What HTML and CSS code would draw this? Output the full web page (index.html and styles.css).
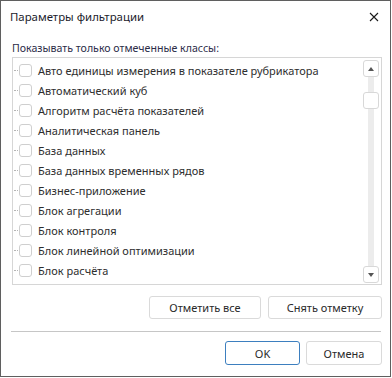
FILE: index.html
```html
<!DOCTYPE html>
<html lang="ru">
<head>
<meta charset="utf-8">
<title>Параметры фильтрации</title>
<link rel="stylesheet" href="styles.css">
</head>
<body>
<div class="dialog">
  <div class="titlebar">
    <span class="title">Параметры фильтрации</span>
    <span class="close" aria-label="Закрыть">
      <svg width="10" height="10" viewBox="0 0 10 10"><path d="M1 1L9 9M9 1L1 9" stroke="#1a1a1a" stroke-width="1.1" fill="none"/></svg>
    </span>
  </div>
  <div class="content">
    <div class="label">Показывать только отмеченные классы:</div>
    <div class="listbox">
      <div class="list">
        <div class="row"><span class="tree"></span><span class="cb"></span><span class="txt">Авто единицы измерения в показателе рубрикатора</span></div>
        <div class="row"><span class="tree"></span><span class="cb"></span><span class="txt">Автоматический куб</span></div>
        <div class="row"><span class="tree"></span><span class="cb"></span><span class="txt">Алгоритм расчёта показателей</span></div>
        <div class="row"><span class="tree"></span><span class="cb"></span><span class="txt">Аналитическая панель</span></div>
        <div class="row"><span class="tree"></span><span class="cb"></span><span class="txt">База данных</span></div>
        <div class="row"><span class="tree"></span><span class="cb"></span><span class="txt">База данных временных рядов</span></div>
        <div class="row"><span class="tree"></span><span class="cb"></span><span class="txt">Бизнес-приложение</span></div>
        <div class="row"><span class="tree"></span><span class="cb"></span><span class="txt">Блок агрегации</span></div>
        <div class="row"><span class="tree"></span><span class="cb"></span><span class="txt">Блок контроля</span></div>
        <div class="row"><span class="tree"></span><span class="cb"></span><span class="txt">Блок линейной оптимизации</span></div>
        <div class="row"><span class="tree"></span><span class="cb"></span><span class="txt">Блок расчёта</span></div>
        <div class="row"><span class="tree"></span><span class="cb"></span></div>
      </div>
      <div class="scrollbar">
        <div class="sbtn"><svg width="6" height="4" viewBox="0 0 6 4"><path d="M0 4L3 0L6 4Z" fill="#555"/></svg></div>
        <div class="track"><div class="thumb"></div></div>
        <div class="sbtn"><svg width="6" height="4" viewBox="0 0 6 4"><path d="M0 0L6 0L3 4Z" fill="#555"/></svg></div>
      </div>
    </div>
    <div class="actions">
      <button class="btn w112">Отметить все</button>
      <button class="btn w114">Снять отметку</button>
    </div>
    <div class="sep"></div>
    <div class="footer">
      <button class="btn ok">OK</button>
      <button class="btn cancel">Отмена</button>
    </div>
  </div>
</div>
</body>
</html>
```
FILE: styles.css
```css
html, body {
  margin: 0;
  padding: 0;
  background: #ffffff;
}
.dialog {
  box-sizing: border-box;
  width: 391px;
  height: 377px;
  border: 1px solid #5f5f5f;
  background: #ffffff;
  font-family: "Noto Sans", "Open Sans", sans-serif;
  font-size: 11px;
  color: #2a2a2a;
}
.titlebar {
  height: 31px;
  display: flex;
  align-items: center;
  justify-content: space-between;
  padding: 0 9px 0 9px;
}
.title {
  font-size: 11.4px;
  color: #1c1c2c;
}
.close {
  display: flex;
  width: 12px;
  height: 12px;
  align-items: center;
  justify-content: center;
  margin-right: 1px;
}
.content {
  padding: 0 8px 0 11px;
}
.label {
  height: 17px;
  line-height: 17px;
  margin-top: 8px;
  font-size: 10.6px;
  color: #2c2c48;
}
.listbox {
  box-sizing: border-box;
  height: 228px;
  border: 1px solid #d6d6d6;
  display: flex;
  overflow: hidden;
}
.list {
  flex: 1;
  padding-top: 2px;
  overflow: hidden;
}
.row {
  height: 20px;
  display: flex;
  align-items: center;
}
.tree {
  width: 4px;
  margin-left: 1px;
  border-top: 1px dotted #b5b5b5;
}
.cb {
  box-sizing: border-box;
  width: 13px;
  height: 13px;
  margin-left: 1px;
  border: 1px solid #cfcfcf;
  border-radius: 3px;
  background: #fff;
}
.txt {
  margin-left: 6px;
  color: #2e2e2e;
  white-space: nowrap;
}
.scrollbar {
  width: 16px;
  margin: 2px 2px 1px 0;
  display: flex;
  flex-direction: column;
}
.sbtn {
  box-sizing: border-box;
  height: 17px;
  border: 1px solid #d8d8d8;
  border-radius: 3px;
  background: #fff;
  display: flex;
  align-items: center;
  justify-content: center;
}
.track {
  flex: 1;
  background: linear-gradient(to right, transparent 5px, #ececec 5px, #ececec 11px, transparent 11px);
}
.thumb {
  box-sizing: border-box;
  height: 17px;
  margin-top: 15px;
  border: 1px solid #d8d8d8;
  border-radius: 3px;
  background: #fff;
}
.actions {
  display: flex;
  justify-content: flex-end;
  gap: 7px;
  margin-top: 11px;
}
.btn {
  box-sizing: border-box;
  height: 23px;
  border: 1px solid #dadada;
  border-radius: 3px;
  background: #fff;
  font-family: "Noto Sans", "Open Sans", sans-serif;
  font-size: 11px;
  color: #2a2a2a;
  padding: 0;
}
.w112 { width: 112px; }
.w114 { width: 114px; }
.sep {
  height: 1px;
  background: #c6c6c6;
  margin: 12px 1px 0 -1px;
}
.footer {
  display: flex;
  justify-content: flex-end;
  gap: 6px;
  margin-top: 9px;
}
.ok {
  width: 75px;
  height: 24px;
  border-color: #3d7fbf;
}
.cancel {
  width: 76px;
  height: 24px;
}
```
